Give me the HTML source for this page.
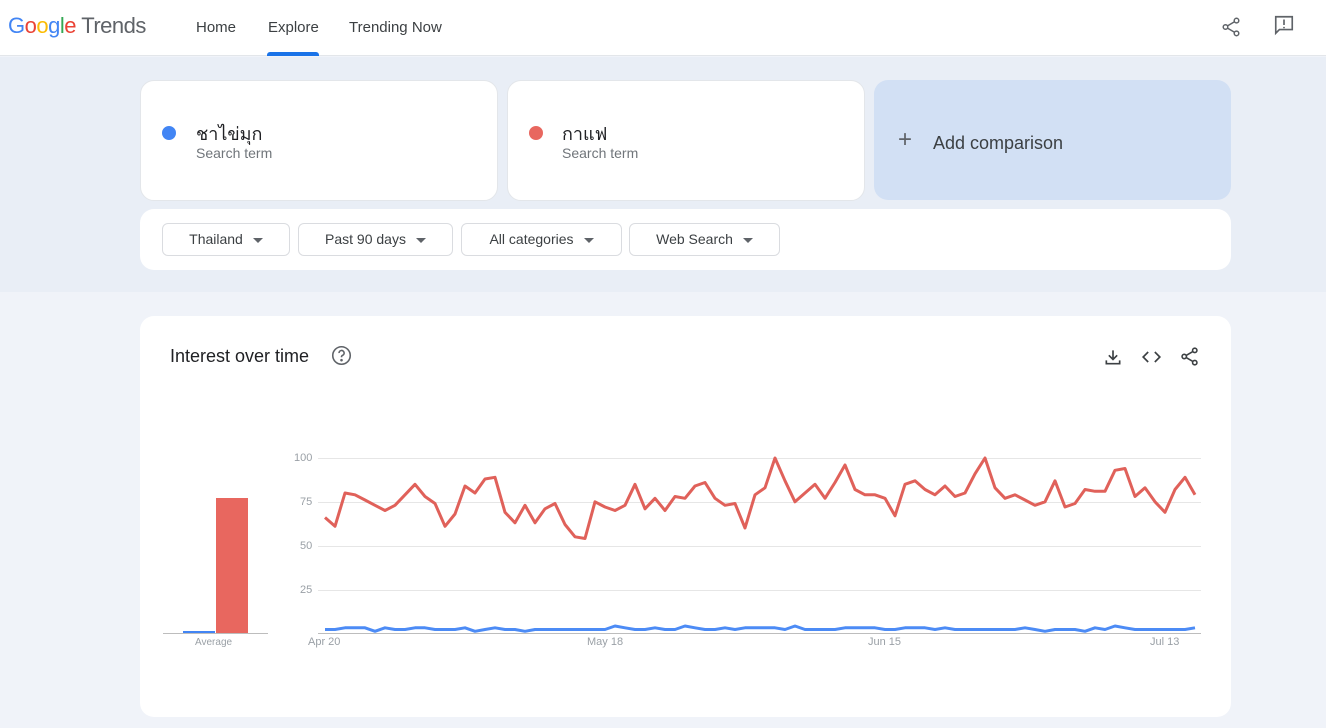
<!DOCTYPE html>
<html><head><meta charset="utf-8"><style>
*{box-sizing:border-box;margin:0;padding:0}
body{width:1326px;height:728px;overflow:hidden;background:#f0f3f9;font-family:"Liberation Sans","Noto Sans CJK SC",sans-serif;color:#202124;position:relative}
.hdr{position:absolute;left:0;top:0;width:1326px;height:56px;background:#fff;border-bottom:1px solid #e3e6ea}
.logo{position:absolute;left:8px;top:13px;font-size:22px;letter-spacing:-0.5px}
.nav{position:absolute;top:19px;font-size:15px;color:#3c4043}
.ul{position:absolute;left:267px;top:52px;width:52px;height:4px;background:#1a73e8;border-radius:3px 3px 0 0}
.top{position:absolute;left:0;top:57px;width:1326px;height:235px;background:#e9eef6}
.card{position:absolute;background:#fff;border-radius:14px}
.dot{position:absolute;width:14px;height:14px;border-radius:50%}
.term{position:absolute;font-size:18px;font-family:"Noto Sans CJK SC",sans-serif}
.sub{position:absolute;font-size:14px;color:#70757a}
.btn{position:absolute;top:223px;height:33px;border:1px solid #dadce0;border-radius:6px;background:#fff;font-size:14px;color:#3c4043;text-align:center;line-height:31px}
.tri{display:inline-block;width:0;height:0;border-left:5px solid transparent;border-right:5px solid transparent;border-top:5px solid #5f6368;margin-left:10px;vertical-align:middle}
.ax{position:absolute;font-size:11px;color:#9aa0a6}
</style></head><body>
<div class="hdr">
<div class="logo"><span style="color:#4285f4">G</span><span style="color:#ea4335">o</span><span style="color:#fbbc05">o</span><span style="color:#4285f4">g</span><span style="color:#34a853">l</span><span style="color:#ea4335">e</span><span style="color:#5f6368"> Trends</span></div>
<div class="nav" style="left:196px">Home</div>
<div class="nav" style="left:268px">Explore</div>
<div class="nav" style="left:349px">Trending Now</div>
<div class="ul"></div>
<svg style="position:absolute;left:1220px;top:16px" width="22" height="22" viewBox="0 0 24 24" fill="none" stroke="#5f6368" stroke-width="1.6"><circle cx="18" cy="5" r="2.5"/><circle cx="6" cy="12" r="2.5"/><circle cx="18" cy="19" r="2.5"/><path d="M8.2 10.8l7.6-4.5M8.2 13.2l7.6 4.5"/></svg>
<svg style="position:absolute;left:1273px;top:14px" width="22" height="22" viewBox="0 0 24 24" fill="none" stroke="#5f6368" stroke-width="1.8"><path d="M3 3h18v14H7l-4 4z"/><path d="M12 6v6M12 14v1.5"/></svg>
</div>
<div class="top"></div>
<div class="card" style="left:140px;top:80px;width:358px;height:121px;border:1px solid #e3e6ea"></div>
<div class="dot" style="left:162px;top:126px;background:#4285f4"></div>
<div class="term" style="left:196px;top:119px">ชาไข่มุก</div>
<div class="sub" style="left:196px;top:145px">Search term</div>
<div class="card" style="left:507px;top:80px;width:358px;height:121px;border:1px solid #e3e6ea"></div>
<div class="dot" style="left:529px;top:126px;background:#e8675f"></div>
<div class="term" style="left:562px;top:119px">กาแฟ</div>
<div class="sub" style="left:562px;top:145px">Search term</div>
<div class="card" style="left:874px;top:80px;width:357px;height:120px;background:#d2e0f4"></div>
<div style="position:absolute;left:898px;top:128px;font-size:24px;color:#5f6368;line-height:24px">+</div>
<div style="position:absolute;left:933px;top:133px;font-size:18px;color:#3c4043">Add comparison</div>
<div class="card" style="left:140px;top:209px;width:1091px;height:61px"></div>
<div class="btn" style="left:162px;width:128px">Thailand<span class="tri"></span></div>
<div class="btn" style="left:298px;width:155px">Past 90 days<span class="tri"></span></div>
<div class="btn" style="left:461px;width:161px">All categories<span class="tri"></span></div>
<div class="btn" style="left:629px;width:151px">Web Search<span class="tri"></span></div>
<div class="card" style="left:140px;top:316px;width:1091px;height:401px"></div>
<div style="position:absolute;left:170px;top:346px;font-size:18px;color:#202124">Interest over time</div>
<svg style="position:absolute;left:331px;top:345px" width="21" height="21" viewBox="0 0 24 24" fill="none" stroke="#5f6368" stroke-width="1.8"><circle cx="12" cy="12" r="10"/><path d="M9.2 9.2a2.9 2.9 0 1 1 4 2.6c-.8.4-1.2 1-1.2 1.9V14" /><circle cx="12" cy="17.3" r=".6" fill="#5f6368"/></svg>
<svg style="position:absolute;left:1103px;top:347px" width="20" height="20" viewBox="0 0 24 24" fill="none" stroke="#3c4043" stroke-width="2"><path d="M12 4v11M7 10l5 5 5-5M4 16v4h16v-4"/></svg>
<svg style="position:absolute;left:1141px;top:347px" width="21" height="20" viewBox="0 0 24 24" fill="none" stroke="#3c4043" stroke-width="2"><path d="M8 6l-6 6 6 6M16 6l6 6-6 6"/></svg>
<svg style="position:absolute;left:1179px;top:346px" width="21" height="21" viewBox="0 0 24 24" fill="none" stroke="#3c4043" stroke-width="1.8"><circle cx="18" cy="5" r="2.5"/><circle cx="6" cy="12" r="2.5"/><circle cx="18" cy="19" r="2.5"/><path d="M8.2 10.8l7.6-4.5M8.2 13.2l7.6 4.5"/></svg>
<svg style="position:absolute;left:0;top:0" width="1326" height="728">
<g stroke="#e6e6e6" stroke-width="1"><line x1="318" y1="458.5" x2="1201" y2="458.5"/><line x1="318" y1="502.5" x2="1201" y2="502.5"/><line x1="318" y1="546.5" x2="1201" y2="546.5"/><line x1="318" y1="590.5" x2="1201" y2="590.5"/></g>
<line x1="318" y1="633.5" x2="1201" y2="633.5" stroke="#bdbdbd"/>
<line x1="163" y1="633.5" x2="268" y2="633.5" stroke="#bdbdbd"/>
<rect x="183" y="631" width="32" height="2" fill="#4285f4"/>
<rect x="216" y="498" width="32" height="135" fill="#e8675f"/>
<polyline id="r" fill="none" stroke="#e0615a" stroke-width="3" stroke-linejoin="round"/>
<polyline id="b" fill="none" stroke="#4c8bf5" stroke-width="3" stroke-linejoin="round"/>
</svg>
<div class="ax" style="left:294px;top:452px">100</div>
<div class="ax" style="left:300px;top:496px">75</div>
<div class="ax" style="left:300px;top:540px">50</div>
<div class="ax" style="left:300px;top:584px">25</div>
<div class="ax" style="left:308px;top:636px;font-size:11px">Apr 20</div>
<div class="ax" style="left:587px;top:636px">May 18</div>
<div class="ax" style="left:868px;top:636px">Jun 15</div>
<div class="ax" style="left:1150px;top:636px">Jul 13</div>
<div class="ax" style="left:195px;top:637px;font-size:10px">Average</div>
<script>
var r=[66,61,80,79,76,73,70,73,79,85,78,74,61,68,84,80,88,89,69,63,73,63,71,74,62,55,54,75,72,70,73,85,71,77,70,78,77,84,86,77,73,74,60,79,83,100,87,75,80,85,77,86,96,82,79,79,77,67,85,87,82,79,84,78,80,91,100,83,77,79,76,73,75,87,72,74,82,81,81,93,94,78,83,75,69,82,89,79];
var b=[2,2,3,3,3,1,3,2,2,3,3,2,2,2,3,1,2,3,2,2,1,2,2,2,2,2,2,2,2,4,3,2,2,3,2,2,4,3,2,2,3,2,3,3,3,3,2,4,2,2,2,2,3,3,3,3,2,2,3,3,3,2,3,2,2,2,2,2,2,2,3,2,1,2,2,2,1,3,2,4,3,2,2,2,2,2,2,3];
function p(a){return a.map(function(v,i){return (325+i*10)+","+(633-v*1.75).toFixed(1)}).join(" ")}
document.getElementById("r").setAttribute("points",p(r));
document.getElementById("b").setAttribute("points",p(b));
</script>
</body></html>
